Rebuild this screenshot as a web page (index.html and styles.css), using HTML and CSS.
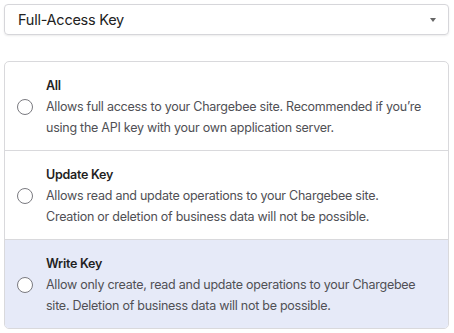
FILE: index.html
```html
<!DOCTYPE html>
<html lang="en">
<head>
    <meta charset="UTF-8">
    <title>API Key Type</title>
    <link rel="stylesheet" href="styles.css">
</head>
<body>

    <!-- Key type dropdown -->
    <div class="select">
        <span class="select-value">Full-Access Key</span>
        <span class="caret"></span>
    </div>

    <!-- Permission options -->
    <div class="options">
        <label class="option">
            <span class="radio"></span>
            <span class="option-text">
                <span class="option-title">All</span>
                <span class="option-desc">Allows full access to your Chargebee site. Recommended if you’re using the API key with your own application server.</span>
            </span>
        </label>
        <label class="option">
            <span class="radio"></span>
            <span class="option-text">
                <span class="option-title">Update Key</span>
                <span class="option-desc">Allows read and update operations to your Chargebee site. Creation or deletion of business data will not be possible.</span>
            </span>
        </label>
        <label class="option option-active">
            <span class="radio"></span>
            <span class="option-text">
                <span class="option-title">Write Key</span>
                <span class="option-desc">Allow only create, read and update operations to your Chargebee site. Deletion of business data will not be possible.</span>
            </span>
        </label>
    </div>

</body>
</html>
```

FILE: styles.css
```css
body {
    margin: 0;
    padding: 4px 5px 4px 4px;
    font-family: Inter, "Noto Sans", sans-serif;
    background-color: #fff;
    color: #2f2f33;
}

.select {
    display: flex;
    align-items: center;
    justify-content: space-between;
    height: 31px;
    padding: 0 12px 0 13px;
    border: 1px solid #d6d6da;
    border-radius: 4px;
    box-shadow: 0 1px 2px rgba(0, 0, 0, 0.08);
    box-sizing: border-box;
}

.select-value {
    font-size: 14.5px;
    letter-spacing: -0.25px;
    color: #222;
}

.caret {
    width: 0;
    height: 0;
    border-left: 3.5px solid transparent;
    border-right: 3.5px solid transparent;
    border-top: 4px solid #666;
}

.options {
    margin-top: 26px;
    border: 1px solid #d9d9dc;
    border-radius: 5px;
    overflow: hidden;
}

.option {
    display: flex;
    align-items: center;
    gap: 13px;
    height: 89px;
    padding: 2px 24px 0 12px;
    box-sizing: border-box;
    border-top: 1px solid #d9d9dc;
}

.option:first-child {
    border-top: none;
    height: 88px;
}

.option-active {
    background-color: #e6eaf8;
}

.radio {
    flex: none;
    width: 14px;
    height: 14px;
    border: 1.5px solid #7a7a80;
    border-radius: 50%;
    background-color: #fff;
}

.option-text {
    display: flex;
    flex-direction: column;
    letter-spacing: -0.25px;
}

.option-title {
    font-size: 12.5px;
    font-weight: 600;
    line-height: 20px;
    color: #1f1f23;
}

.option-desc {
    font-size: 12.5px;
    line-height: 21px;
    color: #505055;
}
```
